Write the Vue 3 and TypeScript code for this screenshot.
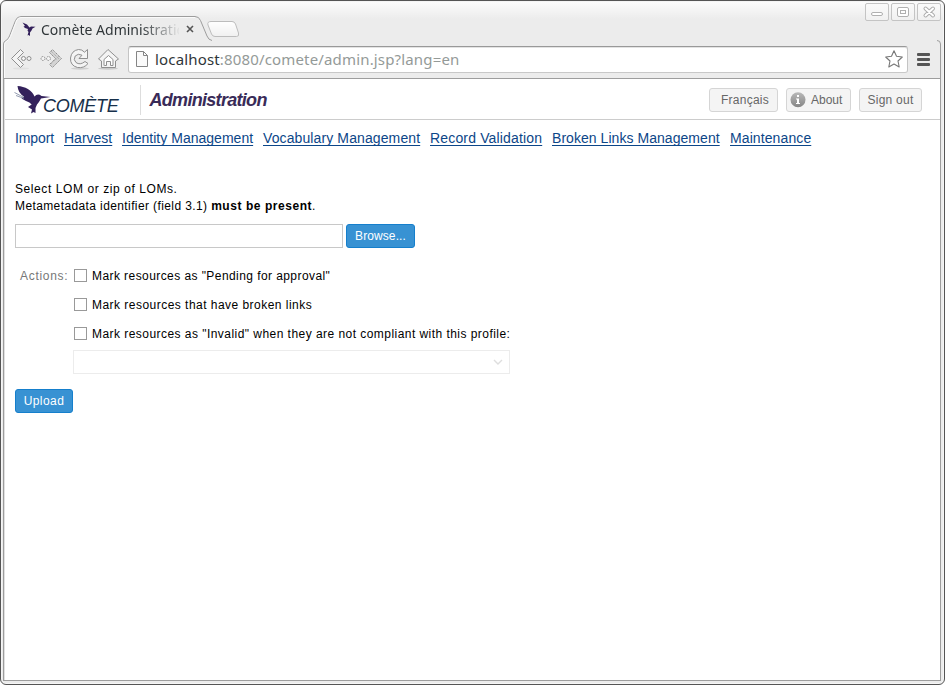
<script setup lang="ts">
import { ref } from 'vue'

interface NavLink { text: string; width: number; spacing: number }

const links: NavLink[] = [
  { text: 'Import', width: 39, spacing: -0.1 },
  { text: 'Harvest', width: 48, spacing: 0 },
  { text: 'Identity Management', width: 131, spacing: 0.02 },
  { text: 'Vocabulary Management', width: 157, spacing: 0.11 },
  { text: 'Record Validation', width: 112, spacing: 0.16 },
  { text: 'Broken Links Management', width: 168, spacing: 0.05 },
  { text: 'Maintenance', width: 81, spacing: 0.1 },
]
const current = ref('Import')
const actions = [
  { label: 'Mark resources as "Pending for approval"', cls: 'l1' },
  { label: 'Mark resources that have broken links', cls: 'l2' },
  { label: 'Mark resources as "Invalid" when they are not compliant with this profile:', cls: 'l3' },
]
const checked = ref<boolean[]>([false, false, false])
</script>

<template>
  <div class="window">
    <header class="chrome">
      <svg class="outline" width="945" height="78" viewBox="0 0 945 78" fill="none">
        <defs>
          <linearGradient id="newtab" x1="0" y1="0" x2="0" y2="1">
            <stop offset="0" stop-color="#fff" /><stop offset="1" stop-color="#f0f0f0" />
          </linearGradient>
        </defs>
        <path d="M3.5 78V44Q3.5 41.500 6 40.500Q8.500 39 9.500 36L15.500 20.500Q17 16.500 21 16.500H195Q199 16.500 200.500 20.500L207 36Q208.500 40 212 40.500" stroke="#9d9d9d" />
        <path d="M4.500 78V44.500Q5 42 7 41Q9.500 39.500 10.500 36.500L16.500 21Q18 17.500 21 17.500H195" stroke="#fafafa" />
        <path d="M211 21.500H232Q234.500 21.500 235.500 24L238.500 33Q239.500 36.500 236.500 36.500H215Q212.500 36.500 211.500 34L208 25Q207 21.500 211 21.500Z" fill="url(#newtab)" stroke="#bcbcbc" />
        <path d="M937 40.500Q940.500 40.500 940.500 44V78" stroke="#9d9d9d" />
      </svg>

      <div class="top">
        <div class="tab">
          <svg class="favicon" width="14" height="15" viewBox="0 0 14 15">
            <path d="M.5 .5L5 2.500L7.500 5.500L9 4.500L13.500 4.800L10.500 6.500L9.500 8.500L8 10.500V14L6.500 13L5.500 13.500L6.500 10L5.500 8.500L6 7L3 6L1.500 4.500L3 4Z" fill="#33215b" />
          </svg>
          <span class="tab-title">Comète Administration</span>
          <svg class="close" width="8" height="8" viewBox="0 0 8 8"><path d="M1 1L7 7M7 1L1 7" stroke="#555" stroke-width="1.600" /></svg>
        </div>
        <div class="win-buttons">
          <span class="wb"><svg width="22" height="16" viewBox="0 0 22 16"><rect x="5.500" y="8.500" width="11" height="3" rx="1.500" fill="#fff" stroke="#b0b0b0" /></svg></span>
          <span class="wb"><svg width="22" height="16" viewBox="0 0 22 16" fill="#fff" stroke="#b0b0b0"><rect x="5.500" y="3.500" width="11" height="9" rx="1.500" /><rect x="8.500" y="6.500" width="5" height="3" /></svg></span>
          <span class="wb"><svg width="22" height="16" viewBox="0 0 22 16" fill="none" stroke-linecap="round"><path d="M7.500 4.500L15 11.500M15 4.500L7.500 11.500" stroke="#adadad" stroke-width="4" /><path d="M7.500 4.500L15 11.500M15 4.500L7.500 11.500" stroke="#fff" stroke-width="2" /></svg></span>
        </div>
      </div>

      <div class="toolbar">
        <svg class="nav-icons" width="110" height="24" viewBox="0 0 110 24" fill="#f4f4f4" stroke="#8f8f8f">
          <ellipse cx="11" cy="21.500" rx="8" ry="1" fill="#e0e0e0" stroke="none" />
          <path d="M10.500 2.500L1.500 11.500L10.500 20.500L13.500 17.500L7.500 11.500L13.500 5.500Z" stroke-linejoin="round" />
          <circle cx="13.500" cy="11.500" r="2" /><circle cx="19" cy="11.500" r="2" />
          <g stroke-dasharray="1.500 .8">
            <path d="M39.500 5.500L42.500 2.500L51.500 11.500L42.500 20.500L39.500 17.500L45.500 11.500Z" fill="#d4d4d4" />
            <circle cx="33" cy="11.500" r="2" /><circle cx="38.500" cy="11.500" r="2" />
          </g>
          <path d="M41 4L49 12M40 6L47 13M49 9L41 17M51 12L43 20" stroke="#a5a5a5" stroke-dasharray="1 1" />
          <ellipse cx="70" cy="21.500" rx="9" ry="1.200" fill="#cfcfcf" stroke="none" />
          <path d="M74.500 5.200L77.500 2.500V11.500H69L72 8.200Q68 6 65.200 9Q63 13 66 15.500Q70 18.500 75 14.500L78 16.500Q74 21.500 67.500 20.500Q60 18.500 60.500 11Q61.500 3.500 68.500 2.500Q72 2.300 74.500 5.200Z" stroke-linejoin="round" />
          <ellipse cx="98" cy="21.500" rx="10" ry="1.200" fill="#c9c9c9" stroke="none" />
          <path d="M98 2.500L88.500 12L91.500 14V20.500H105.500V14L108.500 12Z" stroke-linejoin="round" />
          <path d="M94.500 18.500H96.500V14.500H100.500V18.500H103V12.500L98.500 8.500L94 12.500V18.500Z" fill="#fff" />
        </svg>
        <div class="omnibox">
          <svg width="12" height="16" viewBox="0 0 12 16" fill="#fafafa" stroke="#858585"><path d="M.5 .5H7.500L11.500 4.500V15.500H.5ZM7.500 .5V4.500H11.500" /></svg>
          <span class="url"><b>localhost</b>:8080/comete/admin.jsp?lang=en</span>
          <svg class="star" width="18" height="18" viewBox="0 0 18 18"><path d="M9 .8L11.500 6.300L17.300 7L13 11L14.200 17L9 14L3.800 17L5 11L.7 7L6.500 6.300Z" fill="#fff" stroke="#777" stroke-width="1.100" stroke-linejoin="round" /></svg>
        </div>
        <div class="menu"><i /><i /><i /></div>
      </div>
    </header>

    <main class="page">
      <div class="banner">
        <div class="logo">
          <svg class="bird" width="36" height="30" viewBox="0 0 36 30">
            <path d="M2.500 0C10 .5 17 4 19.500 10.500Q22.500 7 26.500 10L35.500 11L26 12.500Q24.500 15.500 22 18.500L20.500 22L20.500 27L18.500 26L16 27.500L17 23.500L13 21L16.700 18.500Q15 16 11 15L6.500 12.500L9 10.500Q3 7 2.500 0Z" fill="#33215b" />
            <path d="M-.5 6.500L9 11.500M1 9.500L9 12.500" stroke="#77819c" stroke-width=".8" />
          </svg>
          <span class="brand">COMÈTE</span>
        </div>
        <h1>Administration</h1>
        <div class="user-buttons">
          <button class="gray fr">Français</button>
          <button class="gray about">
            <svg width="16" height="16" viewBox="0 0 16 16"><defs><linearGradient id="info" x1="0" y1="0" x2="0" y2="1"><stop offset="0" stop-color="#b9b9b9" /><stop offset="1" stop-color="#858585" /></linearGradient></defs><circle cx="8" cy="7.700" r="7.500" fill="url(#info)" /><path d="M7 3H9V5H7ZM6 6.500H9V11H10V12H6V11H7V7.500H6Z" fill="#fff" /></svg>
            <span>About</span>
          </button>
          <button class="gray out">Sign out</button>
        </div>
      </div>

      <nav class="links">
        <a
          v-for="l in links"
          :key="l.text"
          :class="{ active: l.text === current }"
          :style="{ width: l.width + 'px', letterSpacing: l.spacing + 'px' }"
          @click="current = l.text"
        >{{ l.text }}</a>
      </nav>

      <section class="form">
        <p class="intro"><span class="s1">Select LOM or zip of LOMs.</span><br><span class="s2">Metametadata identifier (field 3.1) </span><strong>must be present</strong>.</p>
        <div class="file-row">
          <div class="field" />
          <button class="blue browse">Browse...</button>
        </div>
        <div class="actions">
          <span class="caption">Actions:</span>
          <div class="choices">
            <label v-for="(a, i) in actions" :key="a.cls">
              <input v-model="checked[i]" type="checkbox">
              <span :class="a.cls">{{ a.label }}</span>
            </label>
            <div class="combo">
              <svg width="10" height="6" viewBox="0 0 10 6"><path d="M1 1L5 5L9 1" fill="none" stroke="#dedede" stroke-width="1.400" /></svg>
            </div>
          </div>
        </div>
        <button class="blue upload">Upload</button>
      </section>
    </main>
  </div>
</template>

<style>
body { background: #fff; overflow: hidden; }
</style>

<style scoped>
.window { position: relative; box-sizing: border-box; width: 945px; height: 685px; border: 1px solid #555; border-radius: 6px; background: linear-gradient(#fdfdfd, #ececec 18px); padding: 0 3px 3px 2px; font-family: "Liberation Sans", sans-serif; box-shadow: inset 0 0 0 1px #f5f5f5; display: flex; flex-direction: column; }
.chrome { height: 77px; flex: none; padding-left: 1px; }
.outline { position: absolute; left: -1px; top: -1px; pointer-events: none; }
.top { display: flex; justify-content: space-between; height: 43px; }
.tab { display: flex; align-items: center; margin: 16px 0 0 18px; height: 24px; font-family: "Noto Sans", sans-serif; }
.favicon { margin-right: 5px; }
.tab-title { width: 138px; overflow: hidden; white-space: nowrap; font-size: 14px; letter-spacing: .02px; color: #303639; -webkit-mask-image: linear-gradient(90deg, #000 100px, transparent 140px); mask-image: linear-gradient(90deg, #000 100px, transparent 140px); }
.close { margin-left: 7px; }
.win-buttons { display: flex; gap: 2px; padding-top: 2px; position: relative; }
.wb { box-sizing: border-box; width: 24px; height: 18px; border: 1px solid #c4c4c4; border-radius: 2px; background: linear-gradient(#fafafa, #f1f1f1); }
.wb svg { display: block; }
.toolbar { display: flex; align-items: flex-start; }
.nav-icons { width: 110px; flex: none; margin: 3px 10px 0 6px; position: relative; }
.omnibox { box-sizing: border-box; width: 780px; height: 27px; margin: 2px 0 0 -2px; padding: 0 4px 1px 7px; display: flex; align-items: center; border: 1px solid; border-color: #999 #c4c4c4 #c8c8c8; border-radius: 3px; background: #fff; box-shadow: inset 0 1px #e3e3e3; }
.url { margin-left: 7px; font: 15px/20px "Noto Sans", sans-serif; letter-spacing: .16px; color: #949a98; white-space: nowrap; }
.url b { font-weight: 400; color: #303639; }
.star { margin-left: auto; }
.menu { display: flex; flex-direction: column; gap: 2px; margin: 9px 0 0 9px; }
.menu i { width: 13px; height: 3px; border-radius: 1px; background: #555; }
.page { box-sizing: border-box; flex: 1; background: #fff; border: 1px solid #9d9d9d; box-shadow: inset 1px 0 #e0e0e0; padding-left: 2px; color: #000; }
.banner { display: flex; height: 40px; margin-left: -1px; padding-left: 1px; border-bottom: 1px solid #ccc; }
.logo { display: flex; width: 134px; }
.bird { margin: 7px 0 0 9px; flex: none; overflow: visible; }
.brand { margin: 17px 0 0 -8px; font: italic 18px/20px "Liberation Sans", sans-serif; letter-spacing: -.25px; color: #17304b; }
h1 { margin: 6px 0 4px; padding-left: 8.500px; border-left: 1px solid #ddd; height: 30px; font: italic bold 18px/31px "Liberation Sans", sans-serif; letter-spacing: -.7px; color: #392b58; }
.user-buttons { display: flex; gap: 8px; margin: 9px 18px 0 auto; }
button { box-sizing: border-box; height: 24px; border-radius: 3px; padding: 0; font: 12px/20px "Liberation Sans", sans-serif; letter-spacing: .45px; white-space: nowrap; }
.gray { border: 1px solid #d5d5d5; background: #f4f4f4; color: #666; letter-spacing: .25px; }
.fr { width: 69px; padding-left: 3px; }
.about { width: 65px; display: flex; align-items: center; padding-left: 3px; gap: 5px; letter-spacing: 0; }
.out { width: 63px; }
.links { display: flex; gap: 10px; padding: 9px 0 0 9px; font-size: 14px; line-height: 18px; color: #0c4688; }
.links a { text-decoration: underline; text-underline-offset: 2px; text-decoration-thickness: 1px; text-decoration-skip-ink: none; white-space: nowrap; }
.links a.active { text-decoration: none; }
.form { padding: 34px 0 0 9px; font-size: 12px; letter-spacing: .5px; }
.intro { margin: 0; line-height: 17px; white-space: nowrap; }
.s1 { letter-spacing: .58px; }
.s2 { letter-spacing: .39px; }
strong { letter-spacing: .55px; }
.file-row { display: flex; gap: 3px; margin-top: 9px; }
.field { box-sizing: border-box; width: 328px; height: 24px; border: 1px solid #c8c8c8; }
.blue { border: 1px solid #157fcc; background: #3892d3; color: #fff; }
.browse { width: 69px; letter-spacing: .1px; }
.actions { display: flex; margin-top: 18px; }
.caption { width: 54px; padding-left: 5px; line-height: 20px; color: #777; letter-spacing: .7px; }
.choices { width: 437px; margin-left: -1px; }
label { display: flex; align-items: center; height: 20px; margin-bottom: 9px; white-space: nowrap; }
input { appearance: none; box-sizing: border-box; width: 13px; height: 13px; margin: 0 5px 1px 1px; border: 1px solid #999; background: #fff; flex: none; }
.l1 { letter-spacing: .425px; }
.l2 { letter-spacing: .47px; }
.l3 { letter-spacing: .455px; }
.combo { box-sizing: border-box; width: 437px; height: 24px; margin-top: -3px; border: 1px solid #ececec; display: flex; align-items: center; justify-content: flex-end; padding-right: 6px; }
.upload { width: 58px; margin-top: 15px; display: block; }
</style>
